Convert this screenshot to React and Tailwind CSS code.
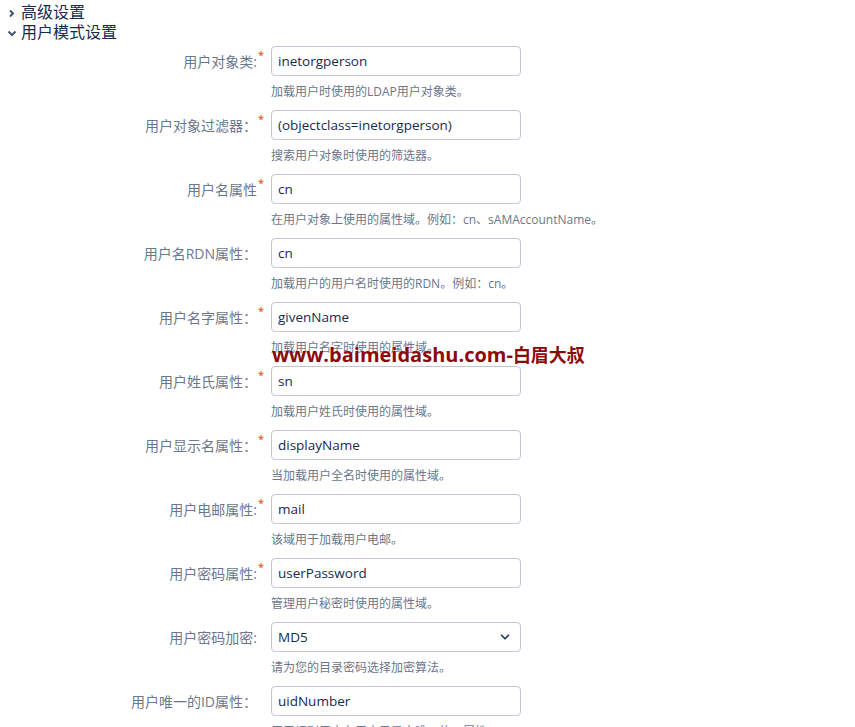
import { ChevronDown } from 'lucide-react'

// LDAP directory – "User schema settings" section of the connector form.
const ROWS = [
  { label: '用户对象类:', req: true, value: 'inetorgperson', help: '加载用户时使用的LDAP用户对象类。' },
  { label: '用户对象过滤器：', req: true, value: '(objectclass=inetorgperson)', help: '搜索用户对象时使用的筛选器。' },
  { label: '用户名属性', req: true, value: 'cn', help: '在用户对象上使用的属性域。例如：cn、sAMAccountName。' },
  { label: '用户名RDN属性：', value: 'cn', help: '加载用户的用户名时使用的RDN。例如：cn。' },
  { label: '用户名字属性：', req: true, value: 'givenName', help: '加载用户名字时使用的属性域。' },
  { label: '用户姓氏属性：', req: true, value: 'sn', help: '加载用户姓氏时使用的属性域。' },
  { label: '用户显示名属性：', req: true, value: 'displayName', help: '当加载用户全名时使用的属性域。' },
  { label: '用户电邮属性:', req: true, value: 'mail', help: '该域用于加载用户电邮。' },
  { label: '用户密码属性:', req: true, value: 'userPassword', help: '管理用户秘密时使用的属性域。' },
  { label: '用户密码加密:', select: true, value: 'MD5', help: '请为您的目录密码选择加密算法。' },
  { label: '用户唯一的ID属性：', value: 'uidNumber', help: '用于识别用户在用户目录中唯一的ID属性。' },
]

function Field({ row }) {
  return (
    <div className="flex h-16">
      <div className="flex h-[30px] w-[257px] items-center justify-end text-[14px] text-[#6b778c]">
        <span className="relative">
          {row.label}
          {row.req && (
            <span className="absolute -top-[2px] left-full ml-[1px] text-[11px] leading-none text-[#de350b]">*</span>
          )}
        </span>
      </div>
      <div className="ml-[14px] w-[250px]">
        <div className="flex h-[30px] items-center justify-between rounded-[4px] border border-[#c1c7d0] bg-white px-[6px] text-[13.5px] text-[#172b4d]">
          <span>{row.value}</span>
          {row.select && <ChevronDown size={14} strokeWidth={3} className="mr-[2px] text-[#253858]" />}
        </div>
        <div className="mt-[6px] h-5 whitespace-nowrap text-[12px] leading-5 text-[#6b778c]">{row.help}</div>
      </div>
    </div>
  )
}

export default function App() {
  return (
    <div
      className="relative min-h-[727px] bg-white text-[#172b4d]"
      style={{ fontFamily: '"Open Sans", "Noto Sans CJK SC", sans-serif' }}
    >
      {/* collapsible section headers */}
      <div className="pt-[2px]">
        <div className="flex h-5 items-center text-[16px]">
          <svg width="21" height="20" viewBox="0 0 21 20" className="shrink-0">
            <path d="M10 8.5 L13 11.5 L10 14.5" fill="none" stroke="#42526e" strokeWidth="2" />
          </svg>
          <span>高级设置</span>
        </div>
        <div className="flex h-5 items-center text-[16px]">
          <svg width="21" height="20" viewBox="0 0 21 20" className="shrink-0">
            <path d="M8.5 9.5 L12 13 L15.5 9.5" fill="none" stroke="#42526e" strokeWidth="2" />
          </svg>
          <span>用户模式设置</span>
        </div>
      </div>

      <div className="pt-1">
        {ROWS.map((r) => (
          <Field key={r.label} row={r} />
        ))}
      </div>

      {/* site watermark stamped over the form */}
      <div className="absolute left-[272px] top-[343px] whitespace-nowrap text-[20px] font-bold leading-6 text-[#8b0a0a]">
        www.baimeidashu.com-<span className="text-[18px]">白眉大叔</span>
      </div>
    </div>
  )
}
